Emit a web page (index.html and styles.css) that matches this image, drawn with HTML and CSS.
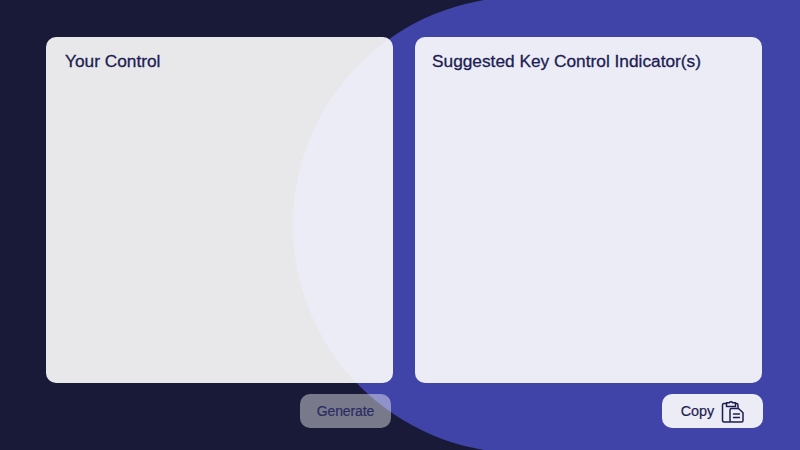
FILE: index.html
```html
<!DOCTYPE html>
<html lang="en">
<head>
<meta charset="utf-8">
<title>Key Control Indicators</title>
<link rel="stylesheet" href="styles.css">
</head>
<body>
<div class="backdrop"></div>
<main class="layout">
  <section class="panel">
    <div class="card"><h2 class="card-title card-title-left">Your Control</h2></div>
    <div class="actions"><button class="btn btn-generate">Generate</button></div>
  </section>
  <section class="panel panel-right">
    <div class="card"><h2 class="card-title">Suggested Key Control Indicator(s)</h2></div>
    <div class="actions"><button class="btn btn-copy">Copy
      <svg class="copy-icon" viewBox="0 0 24 24" width="24" height="24" fill="none" stroke="#1c1d52" stroke-width="1.5" stroke-linejoin="round" stroke-linecap="round">
        <path d="M5.5 4.5H3a1.5 1.5 0 0 0-1.5 1.5v15.5A1.5 1.5 0 0 0 3 23h6"/>
        <path d="M14.5 4.5H15.5A1.5 1.5 0 0 1 17 6v3.5"/>
        <path d="M5.5 7.5V3.8h2.8a1.9 1.9 0 0 1 3.4 0h2.8v3.7z"/>
        <path d="M10.5 9.5h7l4.5 4.2v7.8a1.5 1.5 0 0 1-1.5 1.5h-10a1.5 1.5 0 0 1-1.5-1.5V11a1.5 1.5 0 0 1 1.5-1.5z"/>
        <path d="M12.5 15h6M12.5 18.5h6"/>
      </svg></button></div>
  </section>
</main>
</body>
</html>
```
FILE: styles.css
```css
* { box-sizing: border-box; }
html, body { margin: 0; height: 100%; }
body {
  width: 800px;
  height: 450px;
  overflow: hidden;
  position: relative;
  background: #181a38;
  font-family: "Liberation Sans", Arial, sans-serif;
  color: #1c1d52;
}
.backdrop {
  position: absolute;
  left: 293px;
  top: -3px;
  width: 507px;
  height: 456px;
  background: #4044a8;
  border-radius: 228px 0 0 228px;
}
.layout {
  position: relative;
  display: flex;
  gap: 22px;
  padding: 37px 38px 0 45.5px;
}
.panel { width: 347.5px; display: flex; flex-direction: column; gap: 11px; }
.panel-right { width: 347px; }
.card {
  height: 346px;
  background: rgba(255, 255, 255, 0.9);
  border-radius: 10px;
  padding: 14px 17px;
}
.card-title {
  margin: 0;
  font-size: 17.3px;
  line-height: 20px;
  font-weight: 400;
  -webkit-text-stroke: 0.3px #1c1d52;
}
.card-title-left { padding-left: 2.5px; }
.actions { display: flex; justify-content: flex-end; }
.btn {
  height: 34px;
  border: 0;
  border-radius: 10px;
  font-family: inherit;
  color: #1c1d52;
  display: flex;
  align-items: center;
  justify-content: center;
  -webkit-text-stroke: 0.2px currentColor;
}
.btn-generate {
  width: 91px;
  margin-right: 2px;
  font-size: 14px;
  letter-spacing: -0.1px;
  color: #2a2b63;
  background: rgba(255, 255, 255, 0.42);
}
.btn-copy {
  width: 101px;
  margin-right: -1px;
  padding-left: 7px;
  gap: 7px;
  font-size: 14.4px;
  background: rgba(255, 255, 255, 0.9);
}
.copy-icon { flex: none; }
```
